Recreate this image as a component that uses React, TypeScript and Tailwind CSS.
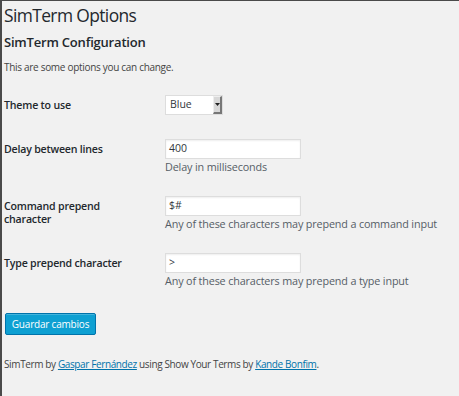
const font = { fontFamily: '"Open Sans", "Liberation Sans", sans-serif' }

type Row = {
  label: string
  value: string
  help?: string
}

const rows: Row[] = [
  { label: 'Delay between lines', value: '400', help: 'Delay in milliseconds' },
  { label: 'Command prepend character', value: '$#', help: 'Any of these characters may prepend a command input' },
  { label: 'Type prepend character', value: '>', help: 'Any of these characters may prepend a type input' },
]

function TextRow({ label, value, help }: Row) {
  return (
    <div className="flex">
      <div className="w-[161px] shrink-0 pr-6 pt-[4px] text-[10.6px] leading-[13px] font-semibold tracking-[-0.2px] text-[#23282d]">
        {label}
      </div>
      <div className="flex flex-col">
        <div className="flex h-[20px] w-[136px] items-center border border-[#dddddd] bg-white px-[3px] text-[10.5px] text-[#32373c] shadow-[inset_0_1px_2px_rgba(0,0,0,0.07)]">
          {value}
        </div>
        {help && <p className="text-[10.8px] leading-[16px] tracking-[-0.15px] text-[#555d66]">{help}</p>}
      </div>
    </div>
  )
}

export default function App() {
  return (
    <div
      className="h-[396px] w-[459px] overflow-hidden border-l-2 border-t border-[#4a4a4a] bg-[#f1f1f1] pl-[2px]"
      style={font}
    >
      <h1 className="text-[17.4px] leading-[28px] font-normal tracking-[-0.6px] text-[#23282d]">SimTerm Options</h1>
      <h2 className="mt-[4px] text-[13px] leading-[18px] font-semibold tracking-[-0.2px] text-[#23282d]">
        SimTerm Configuration
      </h2>
      <p className="mt-[8px] text-[10px] leading-[16px] tracking-[-0.3px] text-[#444]">
        This are some options you can change.
      </p>

      <div className="mt-[20px] flex">
        <div className="flex h-[20px] w-[161px] shrink-0 items-center pt-[1px] text-[10.6px] font-semibold tracking-[-0.2px] text-[#23282d]">
          Theme to use
        </div>
        <div className="flex h-[20px] w-[58px] items-stretch border border-[#dddddd] bg-white">
          <span className="flex flex-1 items-center px-[4px] text-[10.5px] text-[#32373c]">Blue</span>
          <span className="flex w-[9px] items-center justify-center border-r-2 border-b-2 border-l border-t border-r-[#777] border-b-[#777] border-l-[#eee] border-t-[#eee] bg-[#d8d8d8]">
            <svg width="5" height="3" viewBox="0 0 5 3">
              <path d="M0 0h5L2.5 3z" fill="#222" />
            </svg>
          </span>
        </div>
      </div>

      <div className="mt-[24px] flex flex-col gap-[21px]">
        {rows.map((r) => (
          <TextRow key={r.label} {...r} />
        ))}
      </div>

      <button
        type="button"
        className="mt-[24px] ml-[1px] flex h-[22px] w-[91px] items-center justify-center rounded-[2px] border border-[#0073aa] bg-[#0ea0d2] text-[10px] tracking-[-0.2px] text-white shadow-[inset_0_1px_0_rgba(120,200,230,0.5)]"
      >
        Guardar cambios
      </button>

      <p className="mt-[21px] text-[10px] leading-[16px] tracking-[-0.38px] text-[#444]">
        SimTerm by{' '}
        <a className="text-[#0073aa] underline" href="#">
          Gaspar Fernández
        </a>{' '}
        using Show Your Terms by{' '}
        <a className="text-[#0073aa] underline" href="#">
          Kande Bonfim
        </a>
        .
      </p>
    </div>
  )
}
